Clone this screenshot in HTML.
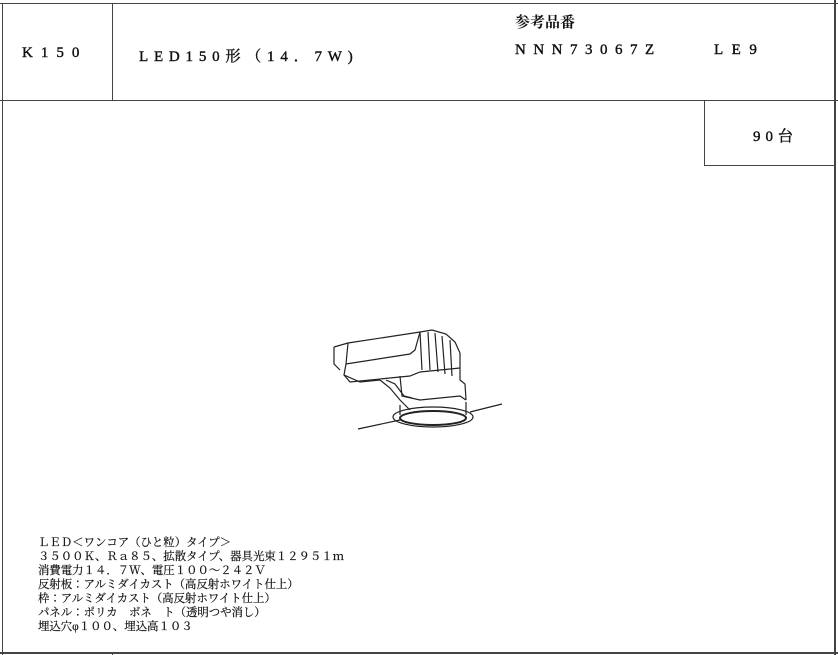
<!DOCTYPE html>
<html><head><meta charset="utf-8"><style>
body{margin:0;width:838px;height:655px;background:#fff;position:relative;overflow:hidden;font-family:"Liberation Serif","Noto Serif CJK JP",serif;color:#111}
.l{position:absolute;background:#444}
.t{position:absolute;white-space:nowrap;font-size:15px;letter-spacing:5px;-webkit-text-stroke:0.4px #111}
.b{position:absolute;left:38px;font-size:11.4px;line-height:14px;white-space:nowrap;letter-spacing:0;-webkit-text-stroke:0.2px #111}
</style></head><body>
<div class="l" style="left:0;top:3px;width:838px;height:1px"></div>
<div class="l" style="left:0;top:100px;width:838px;height:1px"></div>
<div class="l" style="left:2px;top:3px;width:1px;height:652px"></div>
<div class="l" style="left:112px;top:3px;width:1px;height:97px"></div>
<div class="l" style="left:834px;top:0;width:2px;height:655px"></div>
<div class="l" style="left:704px;top:100px;width:1px;height:66px"></div>
<div class="l" style="left:704px;top:165px;width:130px;height:1px"></div>
<div class="l" style="left:0;top:652px;width:838px;height:2px"></div>
<div class="l" style="left:112px;top:652px;width:1px;height:3px"></div>
<div class="t" style="left:22px;top:45px;letter-spacing:8px">K150</div>
<div class="t" style="left:139px;top:45px;letter-spacing:5.8px">LED150形（14．7W)</div>
<div class="t" style="left:515px;top:11px;letter-spacing:0;font-weight:bold;-webkit-text-stroke:0">参考品番</div>
<div class="t" style="left:515px;top:42px;letter-spacing:7.5px">NNN73067Z</div>
<div class="t" style="left:714px;top:42px;letter-spacing:8.5px">LE9</div>
<div class="t" style="left:753px;top:125px;letter-spacing:5px">90台</div>
<div class="b" style="top:536px">ＬＥＤ＜ワンコア（ひと粒）タイプ＞<br>３５００Ｋ、Ｒａ８５、拡散タイプ、器具光束１２９５１ｍ<br>消費電力１４．７Ｗ、電圧１００～２４２Ｖ<br>反射板：アルミダイカスト（高反射ホワイト仕上）<br>枠：アルミダイカスト（高反射ホワイト仕上）<br>パネル：ポリカ　ボネ　ト（透明つや消し）<br>埋込穴φ１００、埋込高１０３</div>
<svg style="position:absolute;left:320px;top:320px" width="190" height="120" viewBox="0 0 190 120" fill="none" stroke="#222" stroke-width="1.2">
<path d="M38 109 L80 100 M150 92 L182 84"/>
<path d="M14 27 L28 23 L100 12 L112 10 L126 14 L135 22 L140 33 L140 60 L145 64 L146 80"/>
<path d="M28 23 L26 44 L24 55 L40 62 L60 60 M26 44 L90 34 L95 30 L100 12"/>
<path d="M24 55 L30 62 L90 56 L100 52 L140 48"/>
<path d="M60 60 L70 68 L80 80 L90 90 M66 60 L75 64 L84 76 L92 78"/>
<path d="M100 12 L102 50 M108 12 L110 50 M115 13 L118 52 M122 16 L125 54 M130 20 L132 56"/>
<path d="M80 56 L82 76 L100 80 L140 76 L146 80"/>
<ellipse cx="113" cy="97" rx="40" ry="10"/>
<ellipse cx="113" cy="98" rx="33" ry="7" stroke-width="2"/>
<path d="M80 85 L80 95 M146 82 L146 95"/>
<path d="M14 27 L14 44 L20 50"/>
</svg>
</body></html>
